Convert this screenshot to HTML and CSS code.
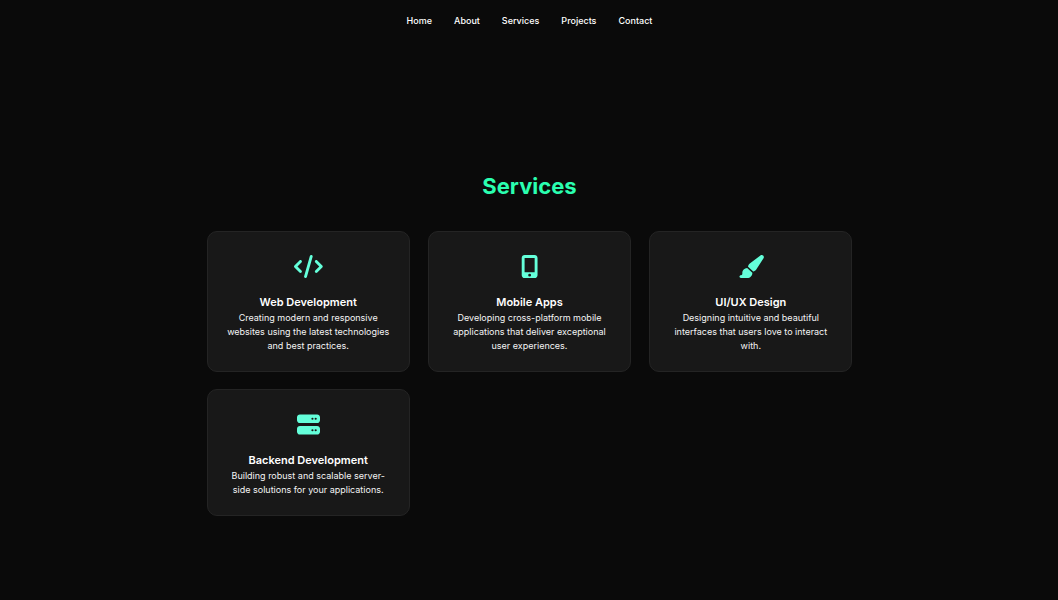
FILE: index.html
```html
<!DOCTYPE html>
<html lang="en">
<head>
<meta charset="utf-8">
<meta name="viewport" content="width=device-width, initial-scale=1">
<title>Services</title>
<link rel="stylesheet" href="styles.css">
</head>
<body>
<header class="site-header">
  <nav class="site-nav" aria-label="Main">
    <a href="#home">Home</a>
    <a href="#about">About</a>
    <a href="#services">Services</a>
    <a href="#projects">Projects</a>
    <a href="#contact">Contact</a>
  </nav>
</header>
<main class="services" id="services">
  <h1 class="services-title">Services</h1>
  <div class="services-grid">
    <article class="card">
      <svg class="card-icon" viewBox="0 0 640 512" aria-hidden="true"><path d="M392.8 1.2c-17-4.9-34.7 5-39.6 22l-128 448c-4.9 17 5 34.7 22 39.6s34.7-5 39.6-22l128-448c4.9-17-5-34.7-22-39.6zm80.6 120.1c-12.5 12.5-12.5 32.8 0 45.3L562.7 256l-89.4 89.4c-12.5 12.5-12.5 32.8 0 45.3s32.8 12.5 45.3 0l112-112c12.5-12.5 12.5-32.8 0-45.3l-112-112c-12.5-12.5-32.8-12.5-45.3 0zm-306.7 0c-12.5-12.5-32.8-12.5-45.3 0l-112 112c-12.5 12.5-12.5 32.8 0 45.3l112 112c12.5 12.5 32.8 12.5 45.3 0s12.5-32.8 0-45.3L77.3 256l89.4-89.4c12.5-12.5 12.5-32.8 0-45.3z"/></svg>
      <h2 class="card-title">Web Development</h2>
      <p class="card-text">Creating modern and responsive websites using the latest technologies and best practices.</p>
    </article>
    <article class="card">
      <svg class="card-icon" viewBox="0 0 384 512" aria-hidden="true"><path d="M16 64C16 28.7 44.7 0 80 0H304c35.3 0 64 28.7 64 64V448c0 35.3-28.7 64-64 64H80c-35.3 0-64-28.7-64-64V64zM224 448a32 32 0 1 0 -64 0 32 32 0 1 0 64 0zM304 64H80V384H304V64z"/></svg>
      <h2 class="card-title">Mobile Apps</h2>
      <p class="card-text">Developing cross-platform mobile applications that deliver exceptional user experiences.</p>
    </article>
    <article class="card">
      <svg class="card-icon" viewBox="0 0 576 512" aria-hidden="true"><path d="M339.3 367.1c27.3-3.9 51.9-19.4 67.2-42.9L568.2 74.1c12.6-19.5 9.4-45.3-7.6-61.2S517.7-4.4 499.1 9.6L262.4 187.2c-24 18-38.2 46.1-38.4 76.1L339.3 367.1zm-19.6 25.4l-116-104.4C143.9 290.3 96 339.6 96 400c0 3.9 .2 7.8 .6 11.6C98.4 429.1 86.4 448 68.8 448H64c-17.7 0-32 14.3-32 32s14.3 32 32 32H208c61.9 0 112-50.1 112-112c0-2.5-.1-5-.2-7.5z"/></svg>
      <h2 class="card-title">UI/UX Design</h2>
      <p class="card-text">Designing intuitive and beautiful interfaces that users love to interact with.</p>
    </article>
    <article class="card">
      <svg class="card-icon" viewBox="0 0 512 512" aria-hidden="true"><path d="M64 32C28.7 32 0 60.7 0 96v64c0 35.3 28.7 64 64 64H448c35.3 0 64-28.7 64-64V96c0-35.3-28.7-64-64-64H64zm280 72a24 24 0 1 1 0 48 24 24 0 1 1 0-48zm48 24a24 24 0 1 1 48 0 24 24 0 1 1 -48 0zM64 288c-35.3 0-64 28.7-64 64v64c0 35.3 28.7 64 64 64H448c35.3 0 64-28.7 64-64V352c0-35.3-28.7-64-64-64H64zm280 72a24 24 0 1 1 0 48 24 24 0 1 1 0-48zm48 24a24 24 0 1 1 48 0 24 24 0 1 1 -48 0z"/></svg>
      <h2 class="card-title">Backend Development</h2>
      <p class="card-text">Building robust and scalable server-side solutions for your applications.</p>
    </article>
  </div>
</main>
</body>
</html>
```
FILE: styles.css
```css
* { box-sizing: border-box; }

body {
  margin: 0;
  padding-left: 1px;
  background: #0a0a0a;
  color: #fff;
  font-family: Inter, "Liberation Sans", sans-serif;
}

.site-header {
  position: sticky;
  top: 0;
  padding: 14px 0;
  background: #0a0a0a;
}

.site-nav {
  display: flex;
  justify-content: center;
  gap: 22px;
}

.site-nav a {
  color: #fff;
  font-size: 9px;
  font-weight: 500;
  line-height: 14px;
  text-decoration: none;
}

.services {
  max-width: 646px;
  margin: 0 auto;
  padding: 128px 0 72px;
}

.services-title {
  margin: 0 0 28px;
  color: #2affb0;
  font-size: 22px;
  font-weight: 700;
  line-height: 33px;
  text-align: center;
}

.services-grid {
  display: grid;
  grid-template-columns: repeat(auto-fit, minmax(200px, 1fr));
  align-items: start;
  gap: 17px 18px;
}

.card {
  padding: 23px 18px 18px;
  border: 1px solid #242424;
  border-radius: 10px;
  background: #181818;
  text-align: center;
}

.card-icon {
  display: block;
  height: 23px;
  margin: 0 auto 15px;
  fill: #64ffda;
}

.card-title {
  margin: 0;
  font-size: 11px;
  font-weight: 600;
  line-height: 18px;
}

.card-text {
  margin: 0;
  color: #f4f4f4;
  font-size: 9px;
  font-weight: 400;
  line-height: 14px;
}
```
